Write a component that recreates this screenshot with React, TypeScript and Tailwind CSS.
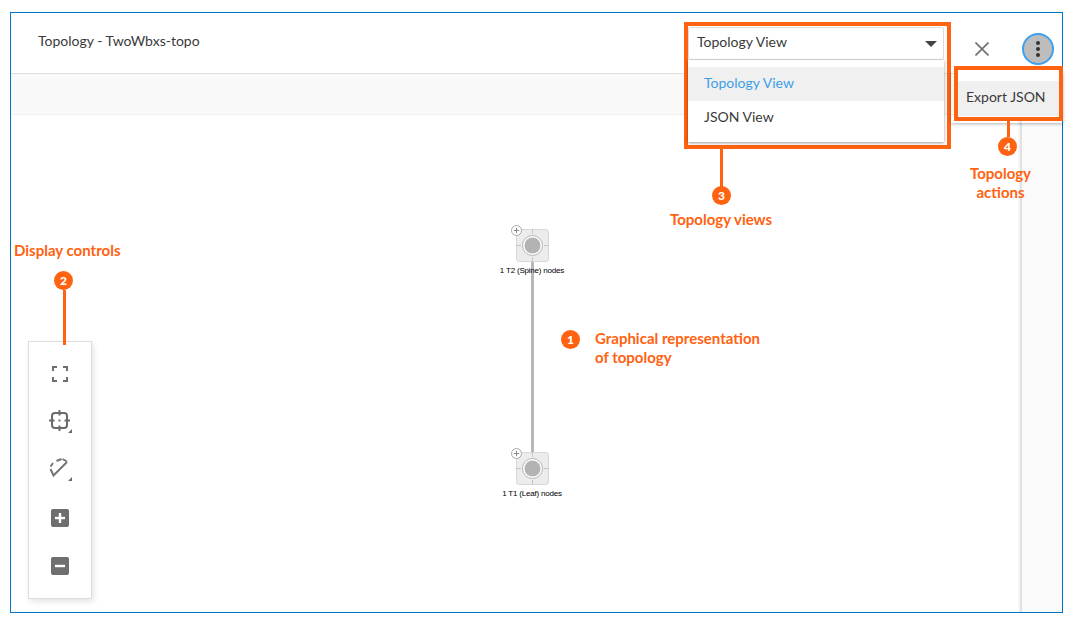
function Badge({ n, className = "" }: { n: number; className?: string }) {
  return (
    <div
      className={`flex h-[19px] w-[19px] shrink-0 items-center justify-center rounded-full bg-[#ff6210] text-[12px] font-black text-white ${className}`}
    >
      {n}
    </div>
  );
}

function Note({ className = "", children }: { className?: string; children: React.ReactNode }) {
  return (
    <div className={`text-[15px] leading-[19px] font-bold whitespace-nowrap text-[#ff6210] ${className}`}>
      {children}
    </div>
  );
}

function TopoNode({ label, className }: { label: string; className: string }) {
  return (
    <div className={`absolute flex w-[100px] flex-col items-center ${className}`}>
      <div className="relative h-[33px] w-[33px] rounded-[3px] border border-[#d8d8d8] bg-[#ececec]">
        <svg viewBox="0 0 33 33" className="absolute top-[-1px] left-[-1px] h-[33px] w-[33px]">
          <path d="M16.5 0v5M16.5 28v5M0 16.5h5M28 16.5h5" stroke="#c4c4c4" strokeWidth="1" />
          <circle cx="16.5" cy="16.5" r="10" fill="#fff" stroke="#b4b4b4" strokeWidth="1" />
          <circle cx="16.5" cy="16.5" r="8" fill="#b3b3b3" />
        </svg>
        <svg viewBox="0 0 11 11" className="absolute top-[-5px] left-[-6px] h-[11px] w-[11px]">
          <circle cx="5.5" cy="5.5" r="5" fill="#fff" stroke="#a8a8a8" />
          <path d="M5.5 2.8v5.4M2.8 5.5h5.4" stroke="#8a8a8a" />
        </svg>
      </div>
      <div className="mt-[4px] font-['Liberation_Sans',sans-serif] text-[8px] leading-[9px] tracking-[-0.2px] whitespace-nowrap text-black">
        {label}
      </div>
    </div>
  );
}

function FitIcon() {
  return (
    <svg viewBox="0 0 16 16" className="h-4 w-4" fill="none" stroke="#6f6f6f" strokeWidth="2">
      <path d="M1 5V1h4M11 1h4v4M15 11v4h-4M5 15H1v-4" />
    </svg>
  );
}

function FocusIcon() {
  return (
    <svg viewBox="0 0 24 24" className="ml-[1px] h-6 w-6" fill="none" stroke="#6a6a6a" strokeWidth="2">
      <rect x="3" y="3" width="15" height="15" rx="3" />
      <path d="M10.5 0v5.5M10.5 15.5V21M0 10.5h5.5M15.5 10.5H21" />
      <circle cx="10.5" cy="10.5" r="1.2" fill="#8a8a8a" stroke="none" />
      <path d="M23 19v4h-4z" fill="#6a6a6a" stroke="none" />
    </svg>
  );
}

function SelectIcon() {
  return (
    <svg viewBox="0 0 24 24" className="ml-[1px] h-6 w-6" fill="none" stroke="#757575" strokeWidth="2">
      <path d="M1.5 11 4.5 17.5 18 4" />
      <path d="M1.5 8.5 4 5M7.5 3l5-2M13.5 1l4.5 2.5" />
      <path d="M23 19v4h-4z" fill="#6a6a6a" stroke="none" />
    </svg>
  );
}

function SquareIcon({ plus }: { plus?: boolean }) {
  return (
    <svg viewBox="0 0 18 18" className="h-[18px] w-[18px]">
      <rect width="18" height="18" rx="2" fill="#6f6f6f" />
      {plus && <path d="M9 4v10" stroke="#fff" strokeWidth="2.4" />}
      <path d="M4 9h10" stroke="#fff" strokeWidth="2.4" />
    </svg>
  );
}

export default function App() {
  return (
    <div className="relative h-[619px] w-[1071px] overflow-hidden bg-white font-['Lato',sans-serif] text-[#3a3a3a]">
      {/* screenshot frame */}
      <div className="absolute top-[12px] left-[10px] flex h-[601px] w-[1053px] flex-col border border-[#0274c8] bg-white">
        <div className="flex h-[61px] items-start border-b border-[#e0e0e0] pr-[8px] pl-[27px] text-[14px]">
          <div className="mt-[17px]">Topology - TwoWbxs-topo</div>
          <div className="mt-[20px] ml-auto flex items-center gap-[33px]">
            <svg viewBox="0 0 14 14" className="h-[14px] w-[14px]" fill="none" stroke="#6e6e6e" strokeWidth="1.6">
              <path d="M0.5 0.5l13 13M13.5 0.5l-13 13" />
            </svg>
            <div className="flex h-[32px] w-[32px] flex-col items-center justify-center gap-[2px] rounded-full border-2 border-[#3da0ee] bg-[#bdbdbd]">
              <span className="h-1 w-1 rounded-full bg-[#333]" />
              <span className="h-1 w-1 rounded-full bg-[#333]" />
              <span className="h-1 w-1 rounded-full bg-[#333]" />
            </div>
          </div>
        </div>
        <div className="h-[41px] border-b border-[#f0f0f0] bg-[#f9f9f9]" />
        <div className="flex flex-1">
          <div className="flex-1" />
          <div className="w-[42px] border-l-2 border-[#e2e2e2] bg-[#fafafa] shadow-[-1px_0_2px_rgba(0,0,0,0.08)]" />
        </div>
      </div>

      {/* topology canvas */}
      <div className="absolute top-[262px] left-[531px] h-[190px] w-[3px] bg-[#b8b8b8]" />
      <TopoNode label="1 T2 (Spine) nodes" className="top-[229px] left-[482px]" />
      <TopoNode label="1 T1 (Leaf) nodes" className="top-[452px] left-[482px]" />

      {/* callout 1 */}
      <div className="absolute top-[330px] left-[561px] flex items-start gap-[15px]">
        <Badge n={1} />
        <Note className="-mt-[1px]">Graphical representation<br />of topology</Note>
      </div>

      {/* callout 2: display controls */}
      <div className="absolute top-[241px] left-[14px] flex flex-col items-start">
        <Note>Display controls</Note>
        <Badge n={2} className="mt-[11px] ml-[40px]" />
        <div className="relative z-10 ml-[49px] h-[55px] w-[3px] bg-[#ff6210]" />
        <div className="-mt-[4px] ml-[14px] flex h-[258px] w-[64px] flex-col items-center border border-[#dcdcdc] bg-white pt-[8px] shadow-[2px_3px_6px_rgba(0,0,0,0.1)]">
          <div className="flex h-[48px] items-center"><FitIcon /></div>
          <div className="flex h-[48px] items-center"><FocusIcon /></div>
          <div className="flex h-[48px] items-center"><SelectIcon /></div>
          <div className="flex h-[48px] items-center"><SquareIcon plus /></div>
          <div className="flex h-[48px] items-center"><SquareIcon /></div>
        </div>
      </div>

      {/* callout 3: view select */}
      <div className="absolute top-[22px] left-[684px] flex flex-col items-start">
        <div className="h-[127px] w-[267px] border-4 border-[#ff6210] pt-[1px] text-[14px]">
          <div className="flex h-[33px] w-[256px] items-center justify-between rounded-[2px] border border-[#dcdcdc] bg-white pr-[6px] pb-[4px] pl-[8px]">
            Topology View
            <svg viewBox="0 0 12 6" className="mt-[4px] h-[6px] w-[12px]"><path d="M0 0h12L6 6z" fill="#444" /></svg>
          </div>
          <div className="flex h-[82px] w-[256px] flex-col bg-white pt-[7px] shadow-[0_1px_3px_rgba(0,0,0,0.4)]">
            <div className="flex h-[34px] items-center bg-[#f0f0f0] pb-[4px] pl-[16px] text-[#3c9fe8]">Topology View</div>
            <div className="flex h-[33px] items-center pb-[3px] pl-[16px]">JSON View</div>
          </div>
        </div>
        <div className="ml-[36px] h-[38px] w-[3px] bg-[#ff6210]" />
        <Badge n={3} className="-mt-[1px] ml-[28px]" />
        <Note className="mt-[5px] -ml-[14px]">Topology views</Note>
      </div>

      {/* callout 4: topology actions */}
      <div className="absolute top-[72px] left-[951px] h-[51px] w-[112px] shadow-[0_1px_3px_rgba(0,0,0,0.3)]" />
      <div className="absolute top-[66px] left-[954px] flex flex-col items-start">
        <div className="h-[55px] w-[109px] border-4 border-[#ff6210] bg-white pt-[11px] text-[14px]">
          <div className="flex h-[35px] items-center bg-[#f0f0f0] pb-[4px] pl-[8px]">Export JSON</div>
        </div>
        <div className="ml-[53px] h-[16px] w-[3px] bg-[#ff6210]" />
        <Badge n={4} className="ml-[44px]" />
        <Note className="mt-[8px] ml-[6px] w-[81px] text-center">Topology<br />actions</Note>
      </div>
    </div>
  );
}
